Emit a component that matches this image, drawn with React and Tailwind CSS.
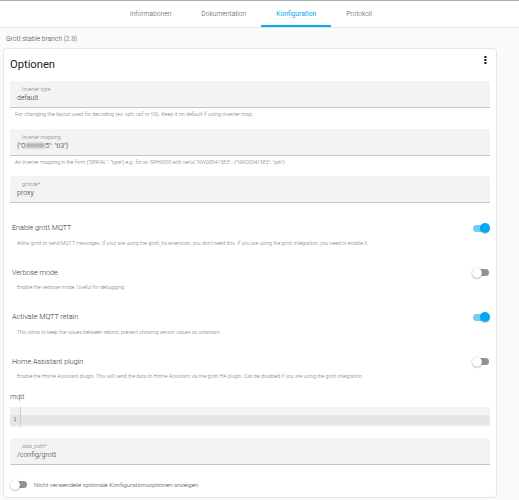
import React from "react";

function Toggle({ on }) {
  return (
    <div className="relative w-[18px] h-[11px] shrink-0">
      <div
        className={
          "absolute left-[1px] right-[1px] top-[2px] h-[7px] rounded-full " +
          (on ? "bg-[#74cdf7]" : "bg-[#939393]")
        }
      />
      <div
        className={
          "absolute top-[0.5px] w-[10px] h-[10px] rounded-full " +
          (on
            ? "right-0 bg-[#03a9f4] shadow-[0_1px_1px_rgba(0,0,0,0.2)]"
            : "left-0 bg-white shadow-[0_0.5px_1.5px_rgba(0,0,0,0.45)]")
        }
      />
    </div>
  );
}

function Field({ label, children }) {
  return (
    <div className="h-[27px] bg-[#f3f3f3] rounded-t-[3px] border-b border-[#c6c6c6] flex flex-col pl-[7px] pt-[5px]">
      <div className="text-[5.2px] leading-[6px] text-[#808080] ml-[5px]">{label}</div>
      <div className="text-[7px] leading-[9px] text-[#2a2a2a] mt-[1.5px]">{children}</div>
    </div>
  );
}

function Helper({ children, cls }) {
  return (
    <div className={"leading-[7px] text-[#777] pl-[5px] mt-[3px] whitespace-nowrap " + cls}>
      {children}
    </div>
  );
}

function ToggleRow({ title, desc, on, mt }) {
  return (
    <div className={mt}>
      <div className="h-[10px] flex items-center justify-between">
        <div className="pl-[2px] text-[7.2px] leading-[10px] text-[#2e2e2e]">{title}</div>
        <Toggle on={on} />
      </div>
      <div className="pl-[7px] mt-[6.5px] text-[5.2px] leading-[7px] text-[#7a7a7a] whitespace-nowrap">
        {desc}
      </div>
    </div>
  );
}

export default function App() {
  const tabs = ["Informationen", "Dokumentation", "Konfiguration", "Protokoll"];
  return (
    <div className="min-h-[500px] bg-[#fafafa] font-[Roboto,sans-serif] font-light">
      <div className="h-[28px] bg-white border-t border-t-[#ababab] border-b border-b-[#e3e3e3] flex justify-center pr-[17px]">
        {tabs.map((t) => (
          <div
            key={t}
            className={
              "h-full px-[15px] flex items-center text-[6.7px] leading-[9px] " +
              (t === "Konfiguration"
                ? "text-[#03a9f4] font-normal border-b-2 border-[#03a9f4] pt-[2px]"
                : "text-[#4a4a4a]")
            }
          >
            {t}
          </div>
        ))}
      </div>
      <div className="pl-[3px]">
        <div className="h-[20px] pt-[7px] pl-[3px] text-[6.7px] leading-[9px] text-[#3a3a3a]">
          Grott stable branch (2.8)
        </div>
        <div className="w-[494px] bg-white border border-[#e6e6e6] rounded-[4px] px-[6px] pt-[9px] pb-[6.5px]">
          <div className="h-[14px] flex justify-between items-start mb-[9px]">
            <div className="text-[11.2px] leading-[14px] text-[#212121] font-normal">Optionen</div>
            <svg className="mt-[-2px] mr-[3px]" width="3" height="8" viewBox="0 0 3 8">
              <rect x="0.3" y="0" width="2.2" height="2" fill="#222" />
              <rect x="0.3" y="3" width="2.2" height="2" fill="#222" />
              <rect x="0.3" y="6" width="2.2" height="2" fill="#222" />
            </svg>
          </div>

          <Field label="Inverter type">default</Field>
          <Helper cls="text-[5.4px] mb-[11px]">
            For changing the layout used for decoding (ex: sph, spf or tl3). Keep it on default if using inverter map.
          </Helper>

          <Field label="Inverter mapping">
            <span>{'{"0'}</span>
            <span className="inline-block align-middle w-[20px] h-[5px] bg-[#b5b5b5] blur-[1px] rounded-[2px]" />
            <span>{'5": "tl3"}'}</span>
          </Field>
          <Helper cls="text-[5.1px] mb-[10px]">
            {'An inverter mapping in the form {"SERIAL": "type"} e.g.: for an SPH6000 with serial "NWO00415E3" : {"NWO00415E3": "sph"}'}
          </Helper>

          <Field label="gmode*">proxy</Field>

          <ToggleRow
            mt="mt-[20px]"
            on
            title="Enable grott MQTT"
            desc="Allow grott to send MQTT messages. If your are using the grott_ha extension, you don't need this. If you are using the grott integration, you need to enable it."
          />
          <ToggleRow
            mt="mt-[21px]"
            on={false}
            title="Verbose mode"
            desc="Enable the verbose mode. Useful for debugging"
          />
          <ToggleRow
            mt="mt-[21px]"
            on
            title="Activate MQTT retain"
            desc="This allow to keep the values between reboot, prevent showing sensor values as unknown"
          />
          <ToggleRow
            mt="mt-[21px]"
            on={false}
            title="Home Assistant plugin"
            desc="Enable the Home Assistant plugin. This will send the data to Home Assistant via the grott HA plugin. Can be disabled if you are using the grott integration."
          />

          <div className="mt-[12px] text-[7px] leading-[10px] text-[#333]">mqtt</div>
          <div className="mt-[5px] h-[20px] bg-[#f5f5f5] flex">
            <div className="w-[11px] bg-[#f0f0f0] border-r border-[#cdcdcd] flex flex-col pt-[8px]">
              <div className="h-[10px] bg-[#e4e4e4] flex items-center justify-center text-[5px] text-[#6a6a6a] font-['DejaVu_Sans_Mono',monospace]">
                1
              </div>
            </div>
            <div className="flex-1 flex flex-col pt-[8px]">
              <div className="h-[10px] bg-[#e6e6e6]" />
            </div>
          </div>

          <div className="mt-[11px]">
            <Field label="data_path*">/config/grott</Field>
          </div>

          <div className="mt-[14px] h-[11px] flex items-center gap-[6px]">
            <Toggle on={false} />
            <div className="text-[6.2px] leading-[8px] text-[#3a3a3a]">
              Nicht verwendete optionale Konfigurationsoptionen anzeigen
            </div>
          </div>
        </div>
      </div>
    </div>
  );
}
